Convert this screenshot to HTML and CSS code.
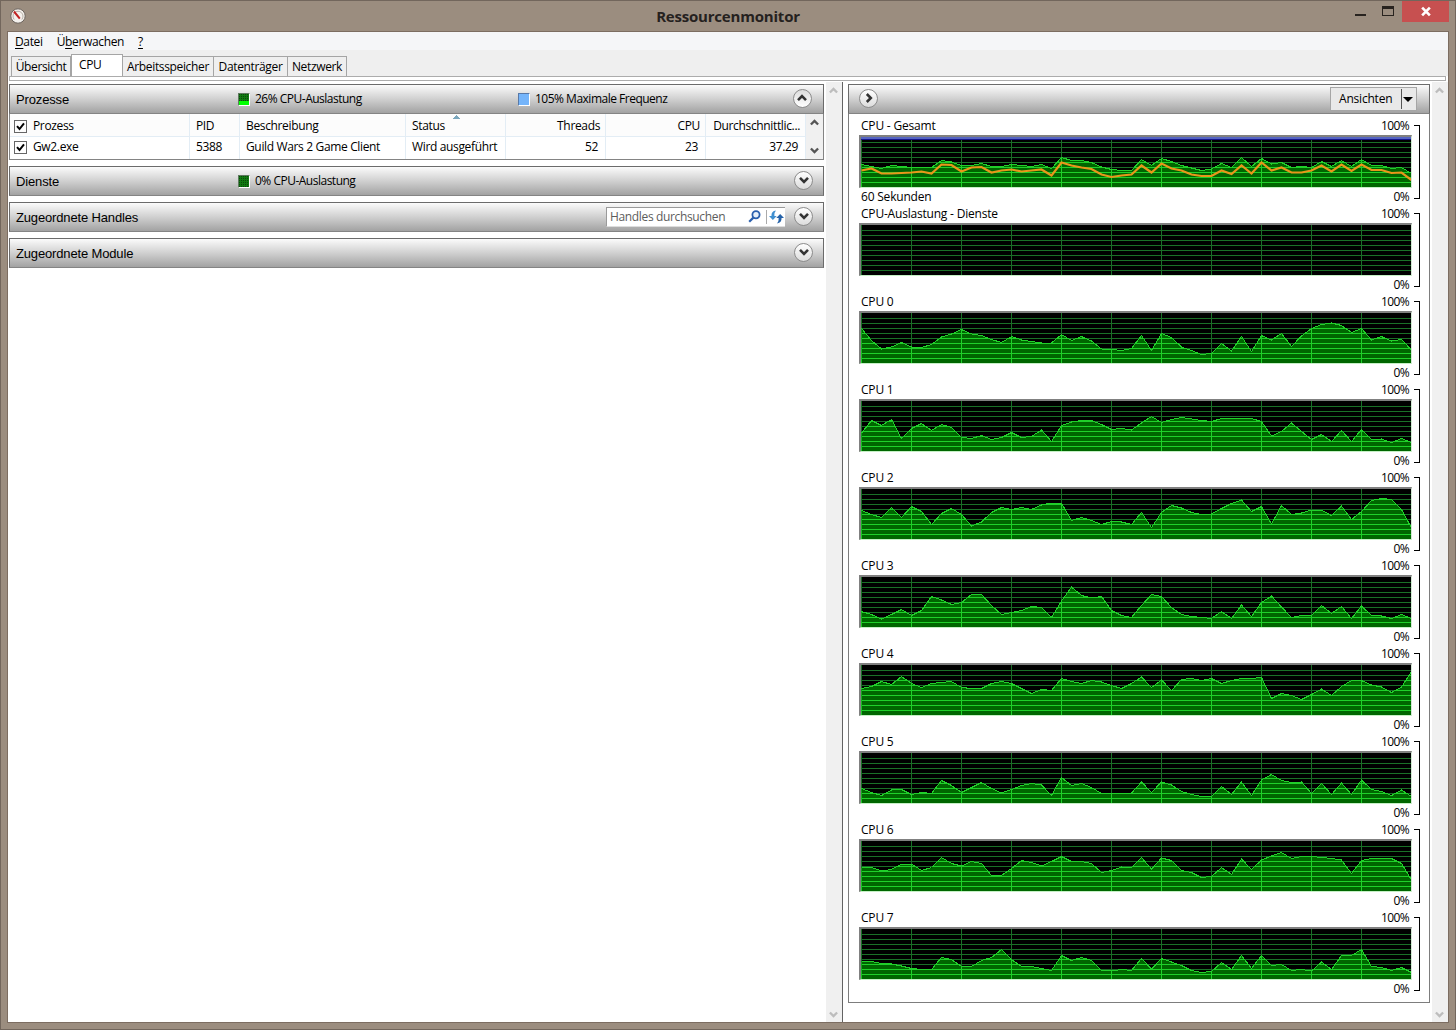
FILE: index.html
```html
<!doctype html>
<html lang="de">
  <head>
    <meta charset="UTF-8" />
    <title>Ressourcenmonitor</title>
    <link rel="stylesheet" href="styles.css">
  </head>
  <body>
    <svg class="defs">
      <symbol id="chevron" viewBox="0 0 10 10">
        <path d="M1 2.8 5 6.8 9 2.8" fill="none" stroke="currentColor" stroke-width="2.6" />
      </symbol>
    </svg>
    <div class="window">
      <header class="titlebar">
        <svg class="app-icon" viewBox="0 0 16 16">
          <circle cx="8" cy="8" r="7.2" fill="#f4f1ed" stroke="#6d655f" />
          <path d="M4.2 11.5A5 5 0 1 1 11.8 11.5" fill="none" stroke="#b5aea6" />
          <path d="M4 3.5 9.8 10.6" stroke="#c02222" stroke-width="2" />
        </svg>
        <h1>Ressourcenmonitor</h1>
        <div class="window-buttons">
          <span class="minimize"></span>
          <span class="maximize"></span>
          <span class="close">
            <svg viewBox="0 0 10 10"><path d="M1.5 1.5 8.5 8.5M8.5 1.5 1.5 8.5" stroke="#fff" stroke-width="2.4" /></svg>
          </span>
        </div>
      </header>
      <div class="client">
        <nav class="menu">
          <span><u>D</u>atei</span>
          <span>Ü<u>b</u>erwachen</span>
          <span><u>?</u></span>
        </nav>
        <div class="tabs">
          <span class="tab tab-overview">Übersicht</span>
          <span class="tab tab-cpu active">CPU</span>
          <span class="tab tab-memory">Arbeitsspeicher</span>
          <span class="tab tab-disk">Datenträger</span>
          <span class="tab tab-network">Netzwerk</span>
        </div>
        <div class="tab-edge"></div>
        <main class="content">
          <section class="left">
            <div class="panel">
              <div class="panel-header">
                <h2>Prozesse</h2>
                <span class="meter meter-26"></span>
                <span class="meter-text usage-text">26% CPU-Auslastung</span>
                <span class="meter meter-blue"></span>
                <span class="meter-text">105% Maximale Frequenz</span>
                <span class="round up"><svg><use href="#chevron" /></svg></span>
              </div>
              <div class="table-wrap">
                <div class="table">
                  <div class="row head">
                    <span class="first"><i class="check"><svg viewBox="0 0 11 11"><path d="M2 5.2 4.5 8 9 2.3" /></svg></i>Prozess</span>
                    <span>PID</span>
                    <span>Beschreibung</span>
                    <span class="sorted">Status</span>
                    <span class="num">Threads</span>
                    <span class="num">CPU</span>
                    <span class="num last">Durchschnittlic...</span>
                  </div>
                  <div class="row">
                    <span class="first"><i class="check"><svg viewBox="0 0 11 11"><path d="M2 5.2 4.5 8 9 2.3" /></svg></i>Gw2.exe</span>
                    <span>5388</span>
                    <span>Guild Wars 2 Game Client</span>
                    <span>Wird ausgeführt</span>
                    <span class="num">52</span>
                    <span class="num">23</span>
                    <span class="num last">37.29</span>
                  </div>
                  <div class="row cut">
                    <span class="first"><i class="check"></i></span>
                    <span></span><span></span><span></span><span></span><span></span><span></span>
                  </div>
                </div>
                <div class="table-scroll">
                  <svg class="up"><use href="#chevron" /></svg>
                  <svg><use href="#chevron" /></svg>
                </div>
              </div>
            </div>
            <div class="panel">
              <div class="panel-header">
                <h2>Dienste</h2>
                <span class="meter"></span>
                <span class="meter-text">0% CPU-Auslastung</span>
                <span class="round"><svg><use href="#chevron" /></svg></span>
              </div>
            </div>
            <div class="panel">
              <div class="panel-header">
                <h2>Zugeordnete Handles</h2>
                <div class="search">
                  <span>Handles durchsuchen</span>
                  <svg class="lens" viewBox="0 0 13 13">
                    <circle cx="8" cy="4.8" r="3.6" fill="#e6f0fa" stroke="#2a5fae" stroke-width="1.8" />
                    <path d="M5.4 7.6 1.2 11.8" stroke="#2a5fae" stroke-width="2.2" />
                  </svg>
                  <svg class="refresh" viewBox="0 0 14 13">
                    <path d="M0 5.5H2.3Q2 1.2 6.5.5 4.6 2.6 5 5.5H7.2L3.6 9.2Z" fill="#3f8fd0" />
                    <path d="M14 7.5H11.7Q12 11.8 7.5 12.5 9.4 10.4 9 7.5H6.8L10.4 3.8Z" fill="#2562a8" />
                  </svg>
                </div>
                <span class="round"><svg><use href="#chevron" /></svg></span>
              </div>
            </div>
            <div class="panel">
              <div class="panel-header">
                <h2>Zugeordnete Module</h2>
                <span class="round"><svg><use href="#chevron" /></svg></span>
              </div>
            </div>
          </section>
          <div class="scrollbar">
            <svg class="up"><use href="#chevron" /></svg>
            <svg><use href="#chevron" /></svg>
          </div>
          <section class="right">
            <div class="charts-panel">
              <div class="panel-header">
                <span class="round side"><svg><use href="#chevron" /></svg></span>
                <div class="views"><span>Ansichten</span><i></i></div>
              </div>
              <div class="charts" id="charts"></div>
            </div>
          </section>
          <div class="scrollbar">
            <svg class="up"><use href="#chevron" /></svg>
            <svg><use href="#chevron" /></svg>
          </div>
        </main>
      </div>
    </div>
    <script src="charts.js"></script>
  </body>
</html>
```

FILE: styles.css
```css
* {
  box-sizing: border-box;
}
body {
  margin: 0;
  font-family: "Open Sans", "Noto Sans", sans-serif;
  font-size: 12px;
  line-height: 16px;
  letter-spacing: -0.35px;
  color: #000;
}
h1,
h2 {
  margin: 0;
  font-weight: normal;
}
i {
  font-style: normal;
}
svg {
  display: block;
}
.defs {
  display: none;
}
.up {
  transform: rotate(180deg);
}

/* window frame */
.window {
  display: flex;
  flex-direction: column;
  width: 1456px;
  height: 1030px;
  padding: 0 7px 7px;
  border: 1px solid #72665c;
  background-color: #9b8d7f;
  overflow: hidden;
}
.titlebar {
  display: grid;
  grid-template-columns: 200px 1fr 200px;
  height: 31px;
  flex: none;
}
.app-icon {
  width: 16px;
  height: 16px;
  margin: 7px 0 0 2px;
}
.titlebar h1 {
  font-size: 15px;
  font-weight: 700;
  line-height: 30px;
  letter-spacing: -0.2px;
  text-align: center;
  color: #25211e;
}
.window-buttons {
  display: flex;
  justify-content: flex-end;
  align-items: flex-start;
  margin-right: -1px;
}
.minimize {
  width: 11px;
  height: 2px;
  margin: 13px 16px 0 0;
  background-color: #28231f;
}
.maximize {
  width: 12px;
  height: 10px;
  margin: 5px 8px 0 0;
  border: 1px solid #28231f;
  border-top-width: 3px;
}
.close {
  display: flex;
  justify-content: center;
  align-items: center;
  width: 47px;
  height: 21px;
  background-color: #c75050;
}
.close svg {
  width: 12px;
  height: 11px;
}
.client {
  display: flex;
  flex-direction: column;
  flex: 1;
  outline: 1px solid #7c6d61;
  background-color: #fff;
}

/* menu and tabs */
.menu {
  display: flex;
  gap: 14px;
  height: 18px;
  padding: 2px 7px 0;
  background-color: #f5f6f8;
}
.menu u {
  text-underline-offset: 2px;
}
.tabs {
  display: flex;
  align-items: flex-end;
  height: 26px;
  padding-left: 3px;
  background-color: #efefef;
}
.tab {
  height: 20px;
  padding-top: 2px;
  border: 1px solid #a5a5a5;
  border-left-width: 0;
  border-bottom: 0;
  text-align: center;
  white-space: nowrap;
}
.tab-overview {
  width: 60px;
  border-left-width: 1px;
}
.tab-cpu {
  width: 52px;
}
.tab-memory {
  width: 91px;
}
.tab-disk {
  width: 74px;
}
.tab-network {
  width: 59px;
}
.tab.active {
  height: 23px;
  margin-bottom: -1px;
  padding: 2px 0 0 7px;
  border-left-width: 1px;
  background-color: #fff;
  text-align: left;
}
.tab-edge {
  height: 5px;
  margin: 0 2px 0 1px;
  border: 1px solid #acacac;
}
.content {
  display: flex;
  flex: 1;
  padding-top: 1px;
}
.left {
  display: flex;
  flex-direction: column;
  gap: 6px;
  width: 818px;
  padding: 2px 2px 0 1px;
}
.scrollbar {
  display: flex;
  flex-direction: column;
  justify-content: space-between;
  align-items: center;
  width: 16px;
  padding: 4px 1px 3px 0;
  background-color: #f0f0f0;
  color: #bdbdbd;
}
.scrollbar svg {
  width: 9px;
  height: 9px;
}

/* collapsible panels */
.panel-header {
  display: flex;
  align-items: center;
  height: 30px;
  border: 1px solid #6b6b6b;
  border-bottom-color: #848484;
  background: linear-gradient(#fbfbfb, #d0d0d0 50%, #a2a2a2);
}
.panel-header h2 {
  width: 228px;
  padding: 1px 0 0 6px;
  font-family: "Liberation Sans", Arial, sans-serif;
  font-size: 13px;
  letter-spacing: -0.15px;
}
.meter {
  width: 12px;
  height: 13px;
  border: 1px solid #5f7a5f;
  border-right-color: #fff;
  border-bottom-color: #fff;
  background: repeating-linear-gradient(90deg, transparent 0 1px, #117a11 1px 2px),
    repeating-linear-gradient(#0a4a0a 0 1px, #117a11 1px 2px);
}
.meter-26 {
  background: linear-gradient(transparent 7px, #0f0 7px),
    repeating-linear-gradient(90deg, transparent 0 1px, #117a11 1px 2px),
    repeating-linear-gradient(#0a4a0a 0 1px, #117a11 1px 2px);
}
.meter-blue {
  border-color: #5879a8 #fff #fff #5879a8;
  background: #75b5fb;
}
.meter-text {
  margin-left: 5px;
  letter-spacing: -0.5px;
}
.usage-text {
  width: 263px;
}
.round {
  display: flex;
  justify-content: center;
  align-items: center;
  width: 19px;
  height: 19px;
  margin: 0 10px 2px auto;
  border: 1px solid #8c8c8c;
  border-radius: 50%;
  background: linear-gradient(#fff, #dcdcdc);
  color: #333;
}
.round svg {
  width: 10px;
  height: 10px;
}
.round.up {
  margin-right: 11px;
}
.search {
  display: flex;
  align-items: center;
  width: 179px;
  height: 20px;
  margin: 0 -1px 1px auto;
  padding-left: 3px;
  border: 1px solid #9a9a9a;
  border-right: 0;
  border-bottom-color: #ddd;
  background-color: #fff;
  color: #5c5c5c;
}
.search + .round {
  margin-left: 10px;
}
.lens {
  width: 13px;
  height: 13px;
  margin: 0 5px 0 auto;
}
.refresh {
  width: 18px;
  height: 14px;
  padding-left: 2px;
  margin-right: 1px;
  border-left: 1px solid #aaa;
}

/* process table */
.table-wrap {
  display: flex;
  height: 46px;
  border: 1px solid #848484;
  border-top: 0;
}
.table {
  flex: 1;
  overflow: hidden;
}
.row {
  display: grid;
  grid-template-columns: 180px 50px 166px 100px 100px 100px 1fr;
  height: 20px;
}
.row > span {
  padding-left: 6px;
  border-right: 1px solid #e3edf5;
  white-space: nowrap;
  line-height: 20px;
}
.row.head {
  height: 23px;
  border-bottom: 1px solid #e3edf5;
  background-color: #fcfcfc;
}
.row.head > span {
  line-height: 24px;
}
.row .num {
  padding-right: 7px;
  text-align: right;
}
.head .num {
  padding-right: 5px;
}
.row .first {
  display: flex;
  align-items: center;
  gap: 6px;
  padding-left: 4px;
}
.check {
  width: 13px;
  height: 13px;
  border: 1px solid #666;
}
.cut .check {
  margin-top: 1px;
}
.check svg {
  width: 11px;
  height: 11px;
}
.check path {
  fill: none;
  stroke: #000;
  stroke-width: 2;
}
.sorted {
  background: conic-gradient(from 135deg at 50% 0, #7ba7bd 90deg, transparent 0) 47px 1px / 7px 4px no-repeat;
}
.table-scroll {
  display: flex;
  flex-direction: column;
  justify-content: space-between;
  align-items: center;
  width: 17px;
  padding: 4px 0;
  background-color: #f0f0f0;
  color: #555;
}
.table-scroll svg {
  width: 9px;
  height: 9px;
}

/* charts */
.right {
  flex: 1;
  padding: 2px 2px 0 5px;
  border-left: 1px solid #636363;
}
.charts-panel {
  height: 919px;
  border: 1px solid #7d7d7d;
  border-top: 0;
}
.charts-panel .panel-header {
  margin: 0 -1px;
}
.round.side {
  margin: 0 auto 2px 10px;
}
.side svg {
  transform: rotate(-90deg);
}
.views {
  display: flex;
  align-items: center;
  width: 87px;
  height: 24px;
  margin-right: 12px;
  padding-left: 8px;
  border: 1px solid #a6a6a6;
  background-color: #e9e9e9;
  letter-spacing: -0.2px;
}
.views i {
  height: 20px;
  margin-left: auto;
  border-left: 1px solid #555;
}
.views i::after {
  content: "";
  display: block;
  margin: 8px 3px 0 1px;
  border: 5px solid transparent;
  border-top-color: #000;
  border-bottom: 0;
}
.charts {
  padding: 3px 0 0 10px;
}
.chart {
  display: flex;
  gap: 2px;
  height: 88px;
}
.chart-body {
  width: 553px;
}
.chart-label,
.chart-foot {
  display: flex;
  justify-content: space-between;
  padding: 1px 3px 0 2px;
  letter-spacing: -0.2px;
}
.percent {
  letter-spacing: -0.6px;
}
.chart-label {
  height: 18px;
}
.chart-foot {
  height: 17px;
}
.plot {
  height: 53px;
  border: 2px solid #808080;
  border-right: 1px solid #d5e8d5;
  border-bottom: 1px solid #c5f0c5;
  background-color: #000;
}
.plot svg {
  width: 550px;
  height: 50px;
}
.bracket {
  width: 6px;
  height: 74px;
  margin-top: 8px;
  border: 1px solid #000;
  border-left: 0;
}
.grid {
  stroke: #1a7027;
  shape-rendering: crispEdges;
}
.grid-lit {
  stroke: #1fd02a;
  shape-rendering: crispEdges;
}
.area {
  fill: #006600;
}
.trace {
  fill: none;
  stroke: #22cf2b;
  shape-rendering: crispEdges;
}
.services {
  fill: none;
  stroke: #e8961a;
  stroke-width: 2.2;
}
.frequency {
  fill: #5565c4;
}
.frequency-edge {
  fill: #17178c;
}
```

FILE: charts.js
```js
// one sample per second, in percent
const charts = [
  {
    name: "CPU - Gesamt",
    foot: "60 Sekunden",
    frequency: true,
    load: [45,41,37,43,41,39,39,39,53,50,43,43,47,41,41,45,43,41,45,37,59,53,53,49,40,35,33,33,55,43,57,51,43,38,33,36,47,39,59,41,57,46,49,39,41,39,51,41,53,41,55,43,43,37,39,27],
    selected: [33,37,27,27,28,29,31,27,45,44,31,39,40,29,33,35,31,33,35,23,49,43,39,36,25,20,23,25,43,29,47,37,33,25,22,22,33,26,43,27,49,33,39,29,29,33,43,31,45,32,45,34,34,28,29,14],
  },
  { name: "CPU-Auslastung - Dienste", load: [] },
  { name: "CPU 0", load: [69,45,28,32,41,32,31,37,52,58,67,58,55,47,41,53,46,43,40,40,57,45,53,44,28,27,25,29,55,25,59,51,32,25,17,19,39,24,53,23,55,46,59,33,54,69,77,80,75,61,69,46,53,44,47,26] },
  { name: "CPU 1", load: [36,61,51,63,25,45,55,41,53,47,27,25,31,23,27,37,27,29,42,19,51,58,61,61,53,43,45,42,56,69,57,63,67,64,61,59,65,65,65,65,59,30,39,56,39,23,33,19,41,19,43,23,24,17,25,17] },
  { name: "CPU 2", load: [57,49,43,63,43,65,55,29,51,61,49,26,34,53,63,59,63,59,68,72,72,37,43,37,29,35,34,29,53,23,53,67,62,53,49,50,61,71,78,55,65,30,67,49,52,58,58,47,66,39,55,77,81,79,59,22] },
  { name: "CPU 3", load: [31,25,16,25,35,23,33,61,54,45,49,65,65,43,25,29,33,41,39,19,52,80,63,58,61,33,23,19,43,65,61,39,25,21,19,17,31,17,44,21,49,62,40,19,23,23,43,27,41,17,42,23,22,17,25,17] },
  { name: "CPU 4", load: [53,57,67,61,77,63,55,63,65,67,55,53,53,63,67,63,53,43,51,49,73,67,63,69,66,59,53,63,76,55,70,49,71,73,69,73,63,69,73,73,75,33,43,39,31,41,52,39,57,69,69,60,56,45,56,87] },
  { name: "CPU 5", load: [29,21,15,26,27,17,21,19,45,35,21,31,41,29,20,27,35,39,36,15,51,35,39,31,19,19,19,20,42,21,42,36,23,17,13,13,33,17,42,15,46,57,45,41,42,19,39,17,40,17,46,27,23,15,26,13] },
  { name: "CPU 6", load: [47,47,40,43,54,54,41,47,67,55,50,59,55,31,31,45,61,57,50,59,69,59,59,55,37,41,48,47,67,44,66,61,41,37,27,29,47,33,64,43,62,70,77,65,69,69,67,65,62,35,61,65,65,65,55,22] },
  { name: "CPU 7", load: [35,35,31,30,26,21,19,19,43,39,25,25,37,43,59,39,25,25,21,17,47,37,43,37,17,16,19,17,41,20,41,34,27,17,13,15,33,19,47,21,47,27,29,17,19,16,34,19,47,47,59,25,23,17,23,13] },
];

const points = (load) => load.map((v, i) => `${i * 10 + 0.5},${50 - v / 2}`).join(" ");

let grid = "";
for (let y = 5; y < 50; y += 5) grid += `M0 ${y + 0.5}H551`;
for (let x = 0; x < 550; x += 50) grid += `M${x + 0.5} 0V50`;

function plot(chart, index) {
  let svg = `<path class="grid" d="${grid}" />`;
  if (chart.load.length) {
    const area = `0,50 ${points(chart.load)} 551,50`;
    svg += `<clipPath id="clip${index}"><polygon points="${area}" /></clipPath>
      <polygon class="area" points="${area}" />
      <path class="grid-lit" clip-path="url(#clip${index})" d="${grid}" />
      <polyline class="trace" points="${points(chart.load)}" />`;
  }
  if (chart.selected) svg += `<polyline class="services" points="${points(chart.selected)}" />`;
  if (chart.frequency) {
    svg += `<rect class="frequency" width="551" height="2" />
      <rect class="frequency-edge" y="2" width="551" height="1" />`;
  }
  return `<svg viewBox="0 0 550 50">${svg}</svg>`;
}

document.getElementById("charts").innerHTML = charts
  .map(
    (chart, i) => `<div class="chart">
      <div class="chart-body">
        <div class="chart-label"><span>${chart.name}</span><span class="percent">100%</span></div>
        <div class="plot">${plot(chart, i)}</div>
        <div class="chart-foot"><span>${chart.foot || ""}</span><span class="percent">0%</span></div>
      </div>
      <div class="bracket"></div>
    </div>`
  )
  .join("");
```
